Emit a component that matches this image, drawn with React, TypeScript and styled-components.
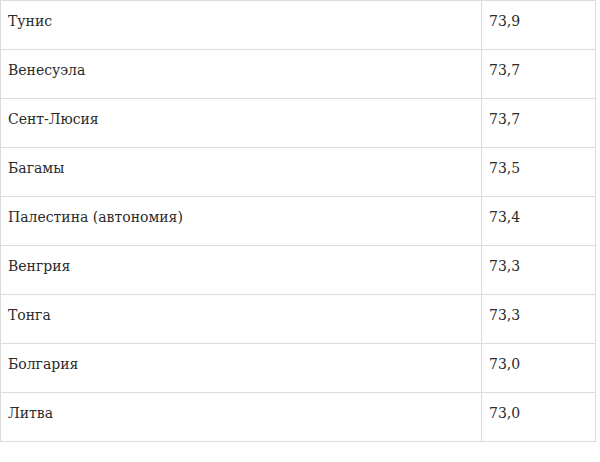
import styled, { createGlobalStyle } from "styled-components";

const GlobalStyle = createGlobalStyle`
  body {
    margin: 0;
    background: #fff;
  }
`;

const rows: [string, string][] = [
  ["Тунис", "73,9"],
  ["Венесуэла", "73,7"],
  ["Сент-Люсия", "73,7"],
  ["Багамы", "73,5"],
  ["Палестина (автономия)", "73,4"],
  ["Венгрия", "73,3"],
  ["Тонга", "73,3"],
  ["Болгария", "73,0"],
  ["Литва", "73,0"],
];

function App() {
  return (
    <>
      <GlobalStyle />
      <Table>
        <tbody>
          {rows.map(([country, value]) => (
            <Row key={country}>
              <Cell>{country}</Cell>
              <Cell $narrow>{value}</Cell>
            </Row>
          ))}
        </tbody>
      </Table>
    </>
  );
}

export default App;

const Table = styled.table`
  width: 596px;
  border-collapse: collapse;
  table-layout: fixed;
  font-family: "DejaVu Serif", serif;
  font-size: 14px;
  color: #2b2b2b;
`;

const Row = styled.tr`
  height: 49px;
`;

const Cell = styled.td<{ $narrow?: boolean }>`
  width: ${(p) => (p.$narrow ? "99px" : "auto")};
  border: 1px solid #dcdcdc;
  padding: 9px 7px 16px;
  vertical-align: top;
  line-height: 22px;
`;
